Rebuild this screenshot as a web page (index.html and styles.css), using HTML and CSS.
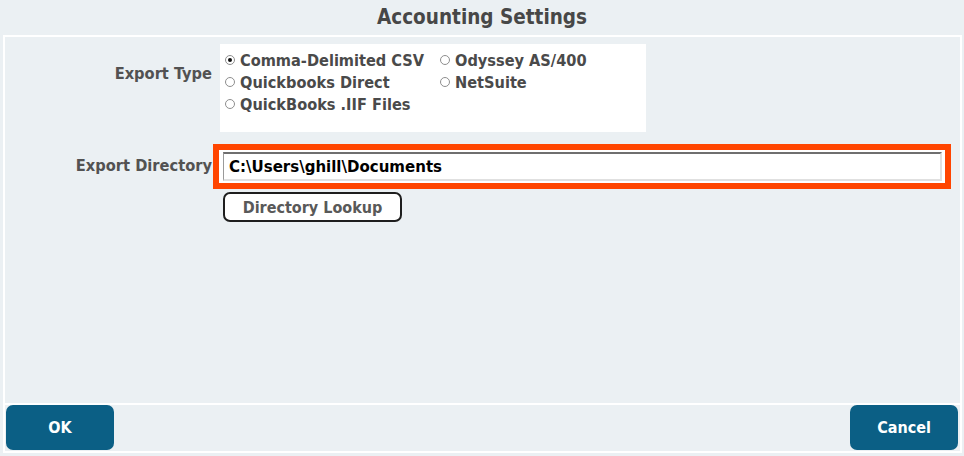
FILE: index.html
```html
<!DOCTYPE html>
<html>
<head>
<meta charset="utf-8">
<link rel="stylesheet" href="styles.css">
</head>
<body>
<h1 class="title">Accounting Settings</h1>
<div class="frame">
  <div class="content">
    <div class="row row-type">
      <div class="label label-type">Export Type</div>
      <div class="radio-box">
        <div class="radio-grid">
          <label class="opt"><span class="dot on"></span>Comma-Delimited CSV</label>
          <label class="opt"><span class="dot"></span>Odyssey AS/400</label>
          <label class="opt"><span class="dot"></span>Quickbooks Direct</label>
          <label class="opt"><span class="dot"></span>NetSuite</label>
          <label class="opt"><span class="dot"></span>QuickBooks .IIF Files</label>
        </div>
      </div>
    </div>
    <div class="row row-dir">
      <div class="label label-dir">Export Directory</div>
      <div class="dir-col">
        <div class="highlight">
          <div class="input">C:\Users\ghill\Documents</div>
        </div>
        <button class="lookup">Directory Lookup</button>
      </div>
    </div>
  </div>
  <div class="footer">
    <button class="btn">OK</button>
    <button class="btn">Cancel</button>
  </div>
</div>
</body>
</html>
```
FILE: styles.css
```css
html, body {
  margin: 0;
  padding: 0;
}
body {
  background: #ebf0f3;
  font-family: "DejaVu Sans Condensed", "DejaVu Sans", sans-serif;
  font-weight: bold;
  color: #4f4f4f;
  width: 964px;
  height: 456px;
  overflow: hidden;
}
.title {
  margin: 0;
  height: 35px;
  line-height: 35px;
  text-align: center;
  font-size: 20.5px;
  font-weight: bold;
  color: #474747;
}
.frame {
  margin: 0 2px 0 3px;
  border: 2px solid #ffffff;
  height: 418px;
  box-sizing: border-box;
  display: flex;
  flex-direction: column;
}
.content {
  height: 368px;
  flex: none;
  border-bottom: 2px solid #ffffff;
  box-sizing: border-box;
  padding-top: 7px;
}
.row {
  display: flex;
}
.label {
  width: 207px;
  text-align: right;
  font-size: 16.3px;
  color: #525252;
  flex: none;
}
.label-type {
  margin-top: 20px;
  margin-right: 8px;
}
.radio-box {
  width: 426px;
  height: 88px;
  background: #ffffff;
  box-sizing: border-box;
  padding: 5px 0 0 5px;
}
.radio-grid {
  display: grid;
  grid-template-columns: 215px auto;
  grid-auto-rows: 22px;
}
.opt {
  display: flex;
  align-items: center;
  font-size: 16.2px;
  color: #4a4a4a;
  white-space: nowrap;
}
.dot {
  width: 8px;
  height: 8px;
  border: 1px solid #8e8e8e;
  border-radius: 50%;
  margin-right: 5px;
  box-sizing: content-box;
  position: relative;
  background: #fff;
}
.dot.on::after {
  content: "";
  position: absolute;
  left: 2px;
  top: 2px;
  width: 4px;
  height: 4px;
  border-radius: 50%;
  background: #111;
}
.row-dir {
  margin-top: 12px;
}
.label-dir {
  margin-top: 12px;
  margin-right: 1px;
}
.dir-col {
  display: flex;
  flex-direction: column;
  align-items: flex-start;
}
.highlight {
  width: 738px;
  height: 45px;
  border: 6px solid #ff4500;
  box-sizing: border-box;
  background: #ffffff;
  padding: 2px 3px 2px 4px;
}
.input {
  height: 29px;
  box-sizing: border-box;
  border-top: 2px solid #6f6f6f;
  border-left: 1px solid #9a9a9a;
  border-right: 2px solid #e0e0e0;
  border-bottom: 2px solid #e0e0e0;
  font-size: 16.7px;
  color: #000;
  line-height: 25px;
  padding-left: 5px;
}
.lookup {
  margin: 3px 0 0 10px;
  width: 179px;
  height: 30px;
  background: #ffffff;
  border: 2px solid #1e1e1e;
  border-radius: 7px;
  font-family: inherit;
  font-weight: bold;
  font-size: 16px;
  color: #595959;
  padding: 0;
}
.footer {
  display: flex;
  justify-content: space-between;
  padding: 0 2px 0 1px;
}
.btn {
  width: 108px;
  height: 45px;
  background: #0b5f85;
  color: #ffffff;
  border: none;
  border-radius: 7px;
  font-family: inherit;
  font-weight: bold;
  font-size: 16px;
  padding: 0;
}
```
